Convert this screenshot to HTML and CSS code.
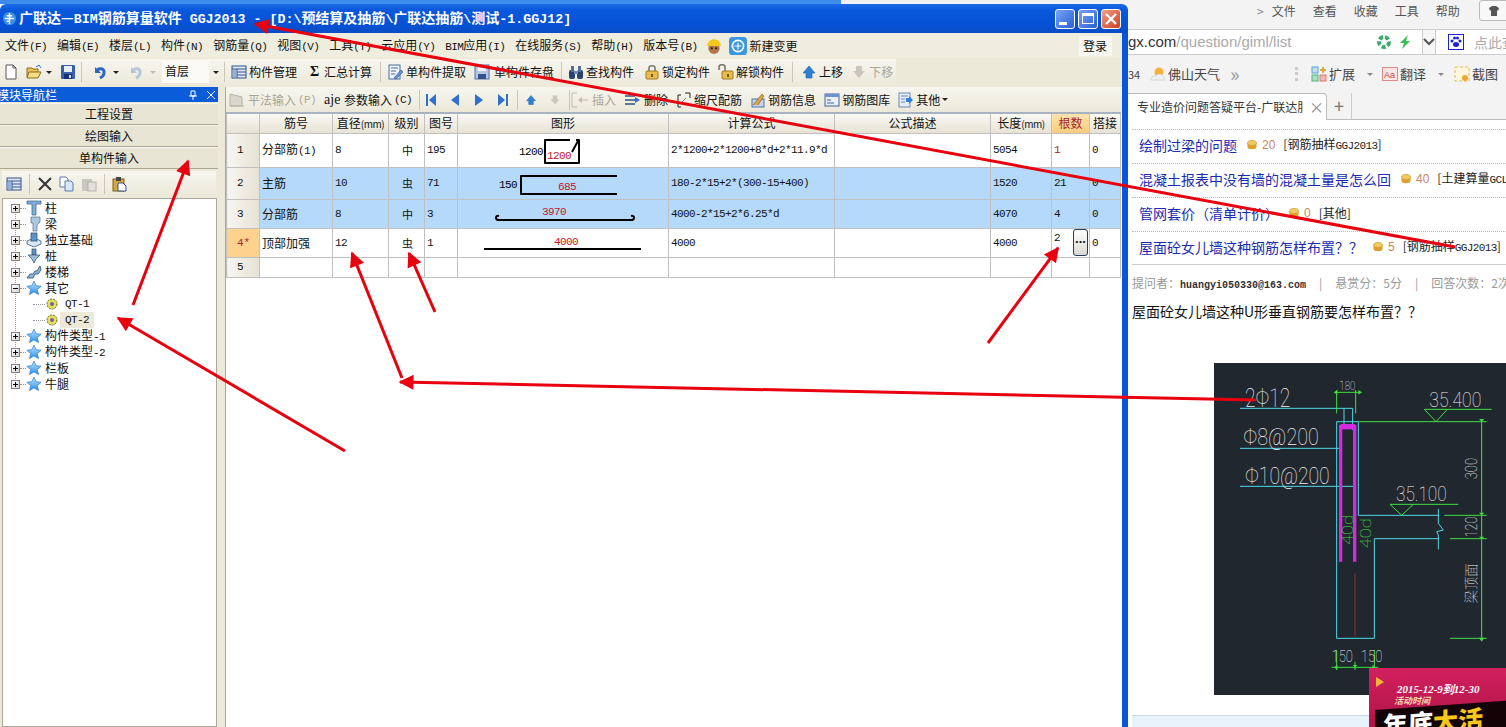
FILE: index.html
```html
<!DOCTYPE html>
<html>
<head>
    <meta charset="UTF-8">
    <meta name="viewport" content="width=device-width, initial-scale=1.0">
    <title>广联达 GGJ2013</title>
    <link rel="stylesheet" href="styles.css">
</head>
<body>
<svg class="defs" width="0" height="0">
    <defs>
        <linearGradient id="gStar" x1="0" y1="0" x2="0" y2="1"><stop offset="0" stop-color="#bfe4ff"/><stop offset="1" stop-color="#2d8fe8"/></linearGradient>
        <symbol id="i-grid" viewBox="0 0 16 16"><rect x="1" y="2" width="14" height="12" fill="#dfe9f7" stroke="#34508c"/><path d="M1 5h14M6 5v9M6 8h9M6 11h9" stroke="#34508c" fill="none"/><rect x="2" y="6" width="3" height="7" fill="#8fb1e0"/></symbol>
        <symbol id="i-new" viewBox="0 0 16 16"><path d="M3 1h7l3 3v11H3z" fill="#fff" stroke="#555"/><path d="M10 1v3h3" fill="none" stroke="#555"/></symbol>
        <symbol id="i-open" viewBox="0 0 16 16"><path d="M1 4h5l1 1h5v8H1z" fill="#e8c25a" stroke="#8a6a1c"/><path d="M3 8h12l-3 6H1z" fill="#f8dc85" stroke="#8a6a1c"/><path d="M10 3l3-2 2 3" fill="none" stroke="#3a6fc4"/></symbol>
        <symbol id="i-save" viewBox="0 0 16 16"><rect x="1" y="1" width="14" height="14" rx="1" fill="#3b5fa8"/><rect x="4" y="2" width="8" height="6" fill="#e8eefa"/><rect x="4" y="10" width="8" height="5" fill="#15307a"/><rect x="9" y="11" width="2" height="3" fill="#dfe6f5"/></symbol>
        <symbol id="i-undo" viewBox="0 0 16 16"><path d="M4 3v6h6" fill="#2f67c2"/><path d="M5 8c2-5 9-4 8 1 0 2-2 4-4 5" fill="none" stroke="#2f67c2" stroke-width="3"/></symbol>
        <symbol id="i-extract" viewBox="0 0 16 16"><rect x="1" y="1" width="11" height="14" fill="#eef3fb" stroke="#4a6aa8"/><path d="M3 4h7M3 7h5M3 10h4" stroke="#4a6aa8"/><path d="M6 14l7-8 2 2-7 7z" fill="#6b93cf" stroke="#2d4d8a" stroke-width=".6"/></symbol>
        <symbol id="i-store" viewBox="0 0 16 16"><rect x="1" y="1" width="14" height="14" fill="#b7c6e3" stroke="#53709f"/><rect x="4" y="1" width="8" height="6" fill="#f2f5fb"/><rect x="4" y="10" width="8" height="5" fill="#34508c"/></symbol>
        <symbol id="i-find" viewBox="0 0 16 16"><rect x="1" y="6" width="6" height="9" rx="2" fill="#29426f"/><rect x="9" y="6" width="6" height="9" rx="2" fill="#29426f"/><rect x="3" y="2" width="3" height="6" fill="#53709f"/><rect x="10" y="2" width="3" height="6" fill="#53709f"/><rect x="6" y="7" width="4" height="3" fill="#7089b5"/></symbol>
        <symbol id="i-lock" viewBox="0 0 16 16"><path d="M5 7V4c0-3 6-3 6 0v3" fill="none" stroke="#777" stroke-width="1.6"/><rect x="2" y="7" width="12" height="8" rx="1" fill="#e9bb4c" stroke="#a07a1f"/><rect x="7" y="10" width="2" height="3" fill="#7a5a10"/></symbol>
        <symbol id="i-unlock" viewBox="0 0 16 16"><path d="M1 6V3c0-3 6-3 6 0v4" fill="none" stroke="#777" stroke-width="1.6"/><rect x="4" y="7" width="11" height="8" rx="1" fill="#e9bb4c" stroke="#a07a1f"/><rect x="9" y="10" width="2" height="3" fill="#7a5a10"/></symbol>
        <symbol id="i-up" viewBox="0 0 16 16"><path d="M8 2l6 7h-3v5H5V9H2z" fill="#2f7fd8" stroke="#1b5aa6" stroke-width=".6"/></symbol>
        <symbol id="i-down" viewBox="0 0 16 16"><path d="M8 14l6-7h-3V2H5v5H2z" fill="#c9c7bd"/></symbol>
        <symbol id="i-plan" viewBox="0 0 18 18"><path d="M2 15V3l12 3v9z" fill="#d8d6ca" stroke="#b5b3a7"/><path d="M2 15h14" stroke="#b5b3a7"/></symbol>
        <symbol id="i-first" viewBox="0 0 12 14"><rect x="1" y="1" width="2" height="12" fill="#2f6fcf"/><path d="M11 1v12L4 7z" fill="#2f6fcf"/></symbol>
        <symbol id="i-prev" viewBox="0 0 12 14"><path d="M10 1v12L2 7z" fill="#2f6fcf"/></symbol>
        <symbol id="i-next" viewBox="0 0 12 14"><path d="M2 1v12l8-6z" fill="#2f6fcf"/></symbol>
        <symbol id="i-last" viewBox="0 0 12 14"><rect x="9" y="1" width="2" height="12" fill="#2f6fcf"/><path d="M1 1v12l7-6z" fill="#2f6fcf"/></symbol>
        <symbol id="i-insert" viewBox="0 0 20 16"><path d="M2 1v14M2 1h5M2 15h5M9 8h9" stroke="#bdbbb0" fill="none"/><path d="M12 5l-4 3 4 3z" fill="#bdbbb0"/></symbol>
        <symbol id="i-delete" viewBox="0 0 18 16"><path d="M1 4h10M1 8h12M1 12h10" stroke="#36507f" stroke-width="1.4"/><path d="M11 5l5 3-5 3z" fill="#2f6fcf"/></symbol>
        <symbol id="i-scale" viewBox="0 0 16 16"><path d="M2 3v12M2 3h3M2 15h3M14 1v5M9 1h5" stroke="#222" fill="none"/><path d="M6 10l4-4" stroke="#888"/></symbol>
        <symbol id="i-info" viewBox="0 0 16 16"><rect x="2" y="7" width="12" height="8" fill="#c6d6ee" stroke="#51719f"/><path d="M3 13L12 2l2 2-6 9" fill="#d8a24a" stroke="#7a5a20" stroke-width=".6"/></symbol>
        <symbol id="i-lib" viewBox="0 0 16 16"><rect x="1" y="2" width="14" height="12" fill="#e9eff9" stroke="#41659e"/><rect x="1" y="2" width="14" height="3" fill="#6d94cf"/><path d="M3 8h4M3 11h7" stroke="#41659e"/></symbol>
        <symbol id="i-other" viewBox="0 0 16 16"><rect x="1" y="1" width="11" height="14" fill="#e6edf8" stroke="#6a88b8"/><path d="M3 4h7M3 7h4M3 10h4" stroke="#6a88b8"/><path d="M8 6h3V4l4 4-4 4v-2H8z" fill="#2f7fd8"/></symbol>
        <symbol id="i-cut" viewBox="0 0 16 16"><path d="M2 2l12 12M14 2L2 14" stroke="#333" stroke-width="2"/></symbol>
        <symbol id="i-copy" viewBox="0 0 16 16"><path d="M1 1h6l2 2v8H1z" fill="#fff" stroke="#5b7cb2"/><path d="M6 5h6l2 2v8H6z" fill="#dbe6f6" stroke="#5b7cb2"/></symbol>
        <symbol id="i-paste" viewBox="0 0 16 16"><rect x="1" y="3" width="10" height="12" fill="#c9c7c0"/><rect x="7" y="6" width="8" height="9" fill="#e2e0da" stroke="#b5b3ab"/></symbol>
        <symbol id="i-clip" viewBox="0 0 16 16"><rect x="1" y="3" width="11" height="12" fill="#d7a93d" stroke="#7d5e16"/><rect x="4" y="1" width="5" height="4" fill="#444"/><path d="M6 7h5l3 3v5H6z" fill="#fff" stroke="#34508c"/></symbol>
        <symbol id="i-star" viewBox="0 0 16 16"><path d="M8 1l2.1 4.7 5.1.5-3.9 3.4 1.2 5L8 11.9l-4.5 2.7 1.2-5L.8 6.200l5.100-.5z" fill="url(#gStar)" stroke="#2a7fd0" stroke-width=".7"/></symbol>
        <symbol id="i-column" viewBox="0 0 16 16"><path d="M1 1h14v3H10v11H6V4H1z" fill="#7fb0dc" stroke="#33597f" stroke-width=".7"/></symbol>
        <symbol id="i-beam" viewBox="0 0 16 16"><path d="M5 1l9 0v5l-3 3v6H7V7H5z" fill="#a8c8e6" stroke="#566d85" stroke-width=".7"/></symbol>
        <symbol id="i-found" viewBox="0 0 16 16"><path d="M1 9l7-3 7 3v3l-7 3-7-3z" fill="#d7e6f4" stroke="#3e5f82" stroke-width=".8"/><rect x="5" y="1" width="6" height="8" fill="#5e93c5" stroke="#2b4a6b" stroke-width=".7"/></symbol>
        <symbol id="i-pile" viewBox="0 0 16 16"><rect x="6" y="1" width="4" height="6" fill="#5e93c5" stroke="#2b4a6b" stroke-width=".7"/><path d="M2 7h12l-4 4-2 4-2-4z" fill="#9dbfde" stroke="#2b4a6b" stroke-width=".7"/></symbol>
        <symbol id="i-stair" viewBox="0 0 16 16"><path d="M1 14l3-4h3l2-3h2l3-5 1 4-3 4H9l-2 4H4z" fill="#8db6dc" stroke="#2b4a6b" stroke-width=".8"/></symbol>
        <symbol id="i-gear" viewBox="0 0 12 12"><circle cx="6" cy="6" r="5" fill="#e9e05a" stroke="#6a6420" stroke-dasharray="2 1"/><circle cx="6" cy="6" r="2" fill="#7a5ca0"/></symbol>
        <symbol id="i-coin" viewBox="0 0 10 10"><ellipse cx="5" cy="3" rx="4.500" ry="2.500" fill="#f2cb62" stroke="#c58f1f" stroke-width=".6"/><path d="M.5 3v4c0 3 9 3 9 0V3c0 3-9 3-9 0" fill="#dca02e"/></symbol>
    </defs>
</svg>

<div class="page">
    <div class="win">
        <div class="strip"><div class="strip-blue"></div><div class="strip-grey"></div></div>
        <div class="titlebar">
            <svg class="app-ico" viewBox="0 0 16 16"><circle cx="8" cy="8" r="7" fill="#3a8fe0"/><path d="M8 2v12M3 8h10M5 5h6M5 11h3" stroke="#fff" stroke-width="1.500"/></svg>
            <span class="title-text">广联达—<span class="tm">BIM</span>钢筋算量软件<span class="tm"> GGJ2013 - [D:\</span>预结算及抽筋<span class="tm">\</span>广联达抽筋<span class="tm">\</span>测试<span class="tm">-1.GGJ12]</span></span>
            <div class="win-btns">
                <div class="wbtn"><i class="w-min"></i></div>
                <div class="wbtn"><i class="w-max"></i></div>
                <div class="wbtn w-close">
                    <svg viewBox="0 0 12 12" width="12" height="12"><path d="M1 1l10 10M11 1L1 11" stroke="#fff" stroke-width="2.400"/></svg>
                </div>
            </div>
        </div>
        <div class="client">
            <div class="menubar">
                <span class="mi">文件<span class="k">(F)</span></span>
                <span class="mi">编辑<span class="k">(E)</span></span>
                <span class="mi">楼层<span class="k">(L)</span></span>
                <span class="mi">构件<span class="k">(N)</span></span>
                <span class="mi">钢筋量<span class="k">(Q)</span></span>
                <span class="mi">视图<span class="k">(V)</span></span>
                <span class="mi">工具<span class="k">(T)</span></span>
                <span class="mi">云应用<span class="k">(Y)</span></span>
                <span class="mi"><span class="k">BIM</span>应用<span class="k">(I)</span></span>
                <span class="mi">在线服务<span class="k">(S)</span></span>
                <span class="mi">帮助<span class="k">(H)</span></span>
                <span class="mi">版本号<span class="k">(B)</span></span>
                <svg class="ic18 helmet" viewBox="0 0 16 16"><circle cx="8" cy="10" r="5" fill="#b3764a"/><path d="M2 8c0-8 12-8 12 0z" fill="#f3c81e"/><circle cx="6" cy="10" r="1" fill="#222"/><circle cx="10" cy="10" r="1" fill="#222"/></svg>
                <svg class="ic18 change" viewBox="0 0 16 16"><rect width="16" height="16" rx="3" fill="#3b97e0"/><circle cx="8" cy="8" r="5" fill="none" stroke="#fff" stroke-width="1.400"/><path d="M8 5v6M5 8h6" stroke="#fff"/></svg>
                <span class="mi new-change">新建变更</span>
                <span class="login">登录</span>
            </div>

            <div class="toolrow">
                <div class="toolbar1">
                    <svg class="ic16 t1-new"><use href="#i-new"/></svg>
                    <svg class="ic16 t1-open"><use href="#i-open"/></svg>
                    <i class="caret t1-c1"></i>
                    <svg class="ic16 t1-save"><use href="#i-save"/></svg>
                    <i class="sep"></i>
                    <svg class="ic16 t1-undo"><use href="#i-undo"/></svg>
                    <i class="caret t1-c2"></i>
                    <svg class="ic16 t1-redo muted"><use href="#i-undo"/></svg>
                    <i class="caret off"></i>
                    <div class="floor">首层</div>
                    <i class="caret floor-c"></i>
                    <i class="sep sep-r6"></i>
                    <span class="tb tb-10"><svg class="ic16"><use href="#i-grid"/></svg>构件管理</span>
                    <span class="tb"><b class="sigma">Σ</b>汇总计算</span>
                    <i class="sep sep-l"></i>
                    <span class="tb"><svg class="ic16"><use href="#i-extract"/></svg>单构件提取</span>
                    <span class="tb tb-e g4"><svg class="ic16"><use href="#i-store"/></svg>单构件存盘</span>
                    <i class="sep sep-m"></i>
                    <span class="tb tb-10"><svg class="ic16"><use href="#i-find"/></svg>查找构件</span>
                    <span class="tb"><svg class="ic16"><use href="#i-lock"/></svg>锁定构件</span>
                    <span class="tb tb-e"><svg class="ic16"><use href="#i-unlock"/></svg>解锁构件</span>
                    <i class="sep sep-w"></i>
                    <span class="tb"><svg class="ic16"><use href="#i-up"/></svg>上移</span>
                    <span class="tb tb-e off"><svg class="ic16"><use href="#i-down"/></svg>下移</span>
                </div>
            </div>

            <div class="main">
                <div class="nav">
                    <div class="nav-title"><span>模块导航栏</span>
                        <svg class="pin" viewBox="0 0 10 10" width="10" height="10"><path d="M3 1h4v5H3zM1 6h8M5 6v4" stroke="#fff" fill="none"/></svg>
                        <svg class="pin" viewBox="0 0 10 10" width="10" height="10"><path d="M1 1l8 8M9 1L1 9" stroke="#fff"/></svg>
                    </div>
                    <div class="nav-btn">工程设置</div>
                    <div class="nav-btn">绘图输入</div>
                    <div class="nav-btn">单构件输入</div>
                    <div class="nav-tools">
                        <svg class="ic16"><use href="#i-grid"/></svg>
                        <i class="sep"></i>
                        <svg class="ic16"><use href="#i-cut"/></svg>
                        <svg class="ic16"><use href="#i-copy"/></svg>
                        <svg class="ic16"><use href="#i-paste"/></svg>
                        <i class="sep"></i>
                        <svg class="ic16"><use href="#i-clip"/></svg>
                    </div>
                    <div class="tree">
                        <div class="node"><i class="plus"></i><i class="dash"></i><svg class="ic16"><use href="#i-column"/></svg><span>柱</span></div>
                        <div class="node"><i class="plus"></i><i class="dash"></i><svg class="ic16"><use href="#i-beam"/></svg><span>梁</span></div>
                        <div class="node"><i class="plus"></i><i class="dash"></i><svg class="ic16"><use href="#i-found"/></svg><span>独立基础</span></div>
                        <div class="node"><i class="plus"></i><i class="dash"></i><svg class="ic16"><use href="#i-pile"/></svg><span>桩</span></div>
                        <div class="node"><i class="plus"></i><i class="dash"></i><svg class="ic16"><use href="#i-stair"/></svg><span>楼梯</span></div>
                        <div class="node"><i class="plus minus"></i><i class="dash"></i><svg class="ic16"><use href="#i-star"/></svg><span>其它</span></div>
                        <div class="node leaf"><i class="leaf-dash"></i><svg class="gear"><use href="#i-gear"/></svg><span class="leaf-name">QT-1</span></div>
                        <div class="node leaf"><i class="leaf-dash"></i><svg class="gear"><use href="#i-gear"/></svg><span class="leaf-name leaf-sel">QT-2</span></div>
                        <div class="node"><i class="plus"></i><i class="dash"></i><svg class="ic16"><use href="#i-star"/></svg><span>构件类型<span class="k">-1</span></span></div>
                        <div class="node"><i class="plus"></i><i class="dash"></i><svg class="ic16"><use href="#i-star"/></svg><span>构件类型<span class="k">-2</span></span></div>
                        <div class="node"><i class="plus"></i><i class="dash"></i><svg class="ic16"><use href="#i-star"/></svg><span>栏板</span></div>
                        <div class="node"><i class="plus"></i><i class="dash"></i><svg class="ic16"><use href="#i-star"/></svg><span>牛腿</span></div>
                    </div>
                </div>

                <div class="pane">
                    <div class="toolbar2">
                        <span class="tb off"><svg class="ic18"><use href="#i-plan"/></svg>平法输入<span class="k">(P)</span></span>
                        <span class="tb tb-2"><span class="aje">aje</span>参数输入<span class="k">(C)</span></span>
                        <i class="sep"></i>
                        <svg class="nav-ic"><use href="#i-first"/></svg>
                        <svg class="nav-ic"><use href="#i-prev"/></svg>
                        <svg class="nav-ic"><use href="#i-next"/></svg>
                        <svg class="nav-ic"><use href="#i-last"/></svg>
                        <i class="sep sep-n"></i>
                        <svg class="nav-ic"><use href="#i-up"/></svg>
                        <svg class="nav-ic"><use href="#i-down"/></svg>
                        <i class="sep sep-o"></i>
                        <span class="tb off"><svg class="ic20"><use href="#i-insert"/></svg>插入</span>
                        <span class="tb"><svg class="ic18"><use href="#i-delete"/></svg>删除</span>
                        <span class="tb"><svg class="ic16"><use href="#i-scale"/></svg>缩尺配筋</span>
                        <span class="tb"><svg class="ic16"><use href="#i-info"/></svg>钢筋信息</span>
                        <span class="tb"><svg class="ic16"><use href="#i-lib"/></svg>钢筋图库</span>
                        <span class="tb"><svg class="ic16"><use href="#i-other"/></svg>其他<i class="caret"></i></span>
                    </div>

                    <table class="grid">
                        <colgroup>
                            <col class="c-no"><col class="c-name"><col class="c-dia"><col class="c-lvl"><col class="c-fig">
                            <col class="c-shape"><col class="c-calc"><col class="c-desc"><col class="c-len"><col class="c-count"><col class="c-lap">
                        </colgroup>
                        <tr class="r-head">
                            <th></th><th>筋号</th><th>直径<span class="unit">(mm)</span></th><th>级别</th><th>图号</th><th>图形</th><th>计算公式</th><th>公式描述</th><th>长度<span class="unit">(mm)</span></th><th class="hot">根数</th><th>搭接</th>
                        </tr>
                        <tr class="r-1">
                            <th class="rn">1</th><td>分部筋<span class="k">(1)</span></td><td class="k dia">8</td><td class="ctr">中</td><td class="k">195</td>
                            <td class="shape"><svg width="211" height="33"><text class="dim" x="61" y="21">1200</text><path class="bar" d="M112 6H87V29H121V6H118M120 7L114 18"/><text class="red" x="89" y="25">1200</text></svg></td>
                            <td class="k">2*1200+2*1200+8*d+2*11.9*d</td><td></td><td class="k">5054</td><td class="k cnt-red">1</td><td class="k">0</td>
                        </tr>
                        <tr class="r-2 sel">
                            <th class="rn">2</th><td>主筋</td><td class="k dia">10</td><td class="ctr">虫</td><td class="k">71</td>
                            <td class="shape"><svg width="211" height="31"><text class="dim" x="41" y="20">150</text><path class="bar" d="M159 8H63V26H159"/><text class="red" x="100" y="22">685</text></svg></td>
                            <td class="k">180-2*15+2*(300-15+400)</td><td></td><td class="k">1520</td><td class="k">21</td><td class="k">0</td>
                        </tr>
                        <tr class="r-3 sel">
                            <th class="rn">3</th><td>分部筋</td><td class="k dia">8</td><td class="ctr">中</td><td class="k">3</td>
                            <td class="shape"><svg width="211" height="28"><path class="bar" d="M41 16C37 15 37 20 41 20H173C177 20 177 15 173 16"/><text class="red" x="84" y="15">3970</text></svg></td>
                            <td class="k">4000-2*15+2*6.25*d</td><td></td><td class="k">4070</td><td class="k">4</td><td class="k">0</td>
                        </tr>
                        <tr class="r-4">
                            <th class="rn cur">4*</th><td>顶部加强</td><td class="k dia">12</td><td class="ctr">虫</td><td class="k">1</td>
                            <td class="shape"><svg width="211" height="28"><path class="bar" d="M26 20H183"/><text class="red" x="96" y="16">4000</text></svg></td>
                            <td class="k">4000</td><td></td><td class="k">4000</td>
                            <td class="k edit"><div class="edit-box"><span class="edit-val">2</span><div class="dots">···</div></div></td>
                            <td class="k">0</td>
                        </tr>
                        <tr class="r-5">
                            <th class="rn">5</th><td></td><td class="dia"></td><td></td><td></td><td></td><td></td><td></td><td></td><td></td><td></td>
                        </tr>
                    </table>
                </div>
            </div>
        </div>
    </div>

    <div class="browser">
        <div class="b-menu">
            <span class="chev">&gt;</span><span>文件</span><span>查看</span><span>收藏</span><span>工具</span><span>帮助</span>
            <div class="skin"><svg viewBox="0 0 12 12" width="12" height="12"><path d="M1 3l3-2h4l3 2-1 3-1-1v6H3V5L2 6z" fill="#555"/></svg></div>
        </div>
        <div class="b-addr">
            <span class="url">gx.com<span class="url-rest">/question/giml/list</span></span>
            <svg class="ic16" viewBox="0 0 16 16"><circle cx="8" cy="8" r="5" fill="none" stroke="#3aae6a" stroke-width="4" stroke-dasharray="4 2"/></svg>
            <svg class="ic16" viewBox="0 0 16 16"><path d="M11 1L3 9h4l-2 6 8-8H9z" fill="#35c24f"/></svg>
            <div class="addr-drop"><svg viewBox="0 0 12 8" width="12" height="8"><path d="M1 1l5 5 5-5" fill="none" stroke="#555" stroke-width="2"/></svg></div>
            <svg class="ic16 paw" viewBox="0 0 16 16"><rect width="16" height="16" fill="#1a22d6"/><rect x="1" y="1" width="14" height="14" fill="#fff"/><circle cx="4" cy="7" r="1.500" fill="#1a22d6"/><circle cx="6.500" cy="4" r="1.500" fill="#1a22d6"/><circle cx="9.500" cy="4" r="1.500" fill="#1a22d6"/><circle cx="12" cy="7" r="1.500" fill="#1a22d6"/><ellipse cx="8" cy="10.500" rx="3" ry="2.500" fill="#1a22d6"/></svg>
            <span class="search-hint">点此查</span>
        </div>
        <div class="b-fav">
            <span class="fav-num">34</span>
            <svg class="ic16" viewBox="0 0 16 16"><circle cx="9" cy="6" r="4.500" fill="#f6b23c"/><path d="M1 14c0-3 2-5 5-4 2-3 8-2 9 4z" fill="#eef0f2" stroke="#d5d8dc"/></svg>
            <span class="fav-city">佛山天气</span>
            <span class="fav-more">»</span>
            <i class="grip"></i>
            <span class="fav-tool f-ext"><svg class="ic16" viewBox="0 0 16 16"><rect x="1" y="1" width="6" height="6" fill="#bfe0f5" stroke="#5aa4d6"/><rect x="1" y="9" width="6" height="6" fill="#a7e0c0" stroke="#52b380"/><rect x="9" y="9" width="6" height="6" fill="#f5b5b0" stroke="#dd7a72"/><path d="M12 1v6M9 4h6" stroke="#e8a838" stroke-width="2"/></svg>扩展<i class="caret"></i></span>
            <span class="fav-tool f-tr"><svg class="ic16" viewBox="0 0 16 16"><rect x=".5" y="1.500" width="15" height="13" fill="#fbe7e4" stroke="#d88"/><text x="2" y="12" class="aa">Aa</text></svg>翻译<i class="caret"></i></span>
            <span class="fav-tool f-sh"><svg class="ic16" viewBox="0 0 16 16"><rect x="1" y="1" width="14" height="14" fill="#fff6dd" stroke="#e7b84a" stroke-dasharray="3 2"/><circle cx="11" cy="12" r="3" fill="#e8a838"/></svg>截图</span>
        </div>
        <div class="b-tabs">
            <div class="tab"><span class="tab-text">专业造价问题答疑平台-广联达服</span><span class="tab-x">×</span></div>
            <div class="tab-new">+</div>
        </div>
        <div class="b-body">
            <div class="q-list">
                <div class="q"><a>绘制过梁的问题</a><svg class="coin"><use href="#i-coin"/></svg><span class="pts">20</span><span class="cat">[钢筋抽样<span class="k">GGJ2013</span>]</span></div>
                <div class="q"><a>混凝土报表中没有墙的混凝土量是怎么回</a><svg class="coin"><use href="#i-coin"/></svg><span class="pts">40</span><span class="cat">[土建算量<span class="k">GCL2013</span>]</span></div>
                <div class="q"><a>管网套价（清单计价）</a><svg class="coin"><use href="#i-coin"/></svg><span class="pts">0</span><span class="cat">[其他]</span></div>
                <div class="q"><a>屋面砼女儿墙这种钢筋怎样布置？？</a><svg class="coin"><use href="#i-coin"/></svg><span class="pts">5</span><span class="cat">[钢筋抽样<span class="k">GGJ2013</span>]</span></div>
            </div>
            <div class="meta">提问者：<span class="mail">huangyi050330@163.com</span><i class="bar-v">|</i>悬赏分：5分<i class="bar-v">|</i>回答次数：2次</div>
            <div class="question">屋面砼女儿墙这种U形垂直钢筋要怎样布置？？</div>

            <svg class="cad" viewBox="12 9 876 996" width="292" height="332">
                <rect x="12" y="9" width="876" height="996" fill="#20272e"/>
                <g class="cy">
                    <path d="M90 145H428M402 145V205M428 145V210M90 265H390M90 379H436"/>
                    <path d="M380 185H445V466H685M380 185V835H493V536H685M685 447V490M685 490L700 510L680 515L685 525V568"/>
                </g>
                <g class="mg">
                    <path d="M392 605V194M434 605V194"/>
                    <path class="mg-top" d="M392 200H434"/>
                </g>
                <path d="M435 640V830" class="rd"/>
                <g class="gn">
                    <path d="M372 97H455M380 90V160M437 90V160M445 185H830M643 148H845M643 148L678 185L712 148"/>
                    <path d="M815 185V835M703 466H830M720 536H830M720 835H830M540 433H745M540 433L575 466L610 433"/>
                    <path d="M365 922H505M380 870V930M435 905V930M493 870V930"/>
                </g>
                <g class="gnf">
                    <path d="M372 97l10-7v14zM455 97l-10-7v14zM815 185l-8-8h16zM815 466l-8-8h16zM815 536l-8-6h16zM815 845l-8-12h16zM372 922l10-7v14zM435 922l-7-7h14zM497 922l-10-7v14z"/>
                </g>
                <g class="cad-t">
                    <text x="388" y="90" font-size="38" textLength="48" lengthAdjust="spacingAndGlyphs">180</text>
                    <text x="105" y="140" font-size="76" textLength="136" lengthAdjust="spacingAndGlyphs">2Φ12</text>
                    <text x="100" y="255" font-size="72" textLength="226" lengthAdjust="spacingAndGlyphs">Φ8@200</text>
                    <text x="105" y="373" font-size="72" textLength="254" lengthAdjust="spacingAndGlyphs">Φ10@200</text>
                    <text x="658" y="140" font-size="62" textLength="156" lengthAdjust="spacingAndGlyphs">35.400</text>
                    <text x="558" y="423" font-size="62" textLength="152" lengthAdjust="spacingAndGlyphs">35.100</text>
                    <text x="365" y="905" font-size="52" textLength="64" lengthAdjust="spacingAndGlyphs">150</text>
                    <text x="453" y="905" font-size="52" textLength="64" lengthAdjust="spacingAndGlyphs">150</text>
                    <text transform="translate(800 358) rotate(-90)" font-size="50" textLength="64" lengthAdjust="spacingAndGlyphs">300</text>
                    <text transform="translate(800 532) rotate(-90)" font-size="50" textLength="62" lengthAdjust="spacingAndGlyphs">120</text>
                    <text transform="translate(798 730) rotate(-90)" font-size="40" class="cad-cjk">梁顶面</text>
                </g>
                <g class="cad-g">
                    <text transform="translate(428 555) rotate(-90)" font-size="44" textLength="90" lengthAdjust="spacingAndGlyphs">40d</text>
                    <text transform="translate(484 565) rotate(-90)" font-size="44" textLength="90" lengthAdjust="spacingAndGlyphs">40d</text>
                </g>
            </svg>
            <div class="b-foot"></div>
        </div>

        <div class="ad">
            <i class="ad-tri"></i>
            <div class="ad-date">2015-12-9到12-30</div>
            <div class="ad-tag">活动时间</div>
            <div class="ad-big">年底<b>大</b><b>活</b></div>
        </div>
    </div>

    <svg class="arrows" viewBox="0 0 1506 727" width="1506" height="727">
        <defs>
            <marker id="ah" viewBox="0 0 10 10" refX="9" refY="5" markerWidth="6" markerHeight="5" orient="auto"><path d="M0 0L10 5L0 10z" fill="#e8000f"/></marker>
        </defs>
        <g class="arrow-lines" marker-end="url(#ah)">
            <path d="M1455 247L255 24"/>
            <path d="M133 305L188 161"/>
            <path d="M345 451L118 318"/>
            <path d="M402 378L352 253"/>
            <path d="M435 312L409 253"/>
            <path d="M988 343L1058 248"/>
            <path d="M1256 400L400 382"/>
        </g>
    </svg>
</div>
</body>
</html>
```

FILE: styles.css
```css
*{
    box-sizing: border-box;
}
body{
    margin: 0;
    font-family: "Noto Sans CJK SC", "Liberation Sans", sans-serif;
    font-size: 12px;
    line-height: 16px;
    color: #111;
    background: #fff;
}
.defs{
    position: absolute;
}
.page{
    position: relative;
    display: flex;
    width: 1506px;
    height: 727px;
    overflow: hidden;
}
.arrows{
    position: absolute;
    left: 0;
    top: 0;
    pointer-events: none;
}
.arrow-lines path{
    fill: none;
    stroke: #e8000f;
    stroke-width: 3;
}
.k{
    font-family: "Liberation Mono", monospace;
    font-size: 11px;
    letter-spacing: -0.6px;
}
i{
    font-style: normal;
}
.ic16{
    width: 16px;
    height: 16px;
    flex: none;
}
.ic18{
    width: 18px;
    height: 18px;
    flex: none;
}
.ic20{
    width: 20px;
    height: 16px;
    flex: none;
}

/* software window */
.win{
    width: 1128px;
    flex: none;
    display: flex;
    flex-direction: column;
}
.strip{
    display: flex;
    height: 4px;
    flex: none;
}
.strip-blue{
    width: 841px;
    background: #3d8bea;
}
.strip-grey{
    flex: 1;
    background: #f1f1f1;
}
.titlebar{
    height: 29px;
    flex: none;
    display: flex;
    align-items: center;
    padding-left: 2px;
    border-radius: 6px 6px 0 0;
    background: linear-gradient(#1a6ce8 0, #0a58dc 20%, #0552d6 70%, #0a4cc4 100%);
}
.app-ico{
    width: 15px;
    height: 15px;
    margin-right: 2px;
}
.title-text{
    font-size: 14px;
    font-weight: bold;
    color: #fff;
    white-space: pre;
}
.tm{
    font-family: "Liberation Mono", monospace;
    font-size: 13.3px;
}
.win-btns{
    margin-left: auto;
    margin-right: 7px;
    display: flex;
    gap: 3px;
}
.wbtn{
    width: 20px;
    height: 20px;
    border: 1px solid #fff;
    border-radius: 3px;
    background: linear-gradient(135deg, #7aa4f2, #2a5fd6);
    position: relative;
    display: flex;
    align-items: center;
    justify-content: center;
}
.w-min{
    width: 8px;
    height: 3px;
    background: #fff;
    margin-top: 9px;
    margin-right: 5px;
}
.w-max{
    width: 12px;
    height: 11px;
    border: 1px solid #fff;
    border-top-width: 3px;
}
.w-close{
    background: linear-gradient(135deg, #f0a08a, #d23c1c);
}
.client{
    flex: 1;
    display: flex;
    flex-direction: column;
    min-height: 0;
    border-right: 6px solid #0a55d8;
    box-shadow: inset -2px 0 0 #e4e2d6;
    background: #ece9d8;
}
.menubar{
    height: 25px;
    flex: none;
    display: flex;
    align-items: center;
    padding-left: 5px;
    padding-right: 10px;
    gap: 10px;
    background: #efedde;
    white-space: nowrap;
}
.helmet{
    margin-left: -2px;
}
.change{
    margin-left: -4px;
}
.new-change{
    margin-left: -8px;
}
.login{
    margin-left: auto;
    background: #f7f6ef;
    padding: 2px 5px 2px 4px;
}
.toolrow{
    height: 28px;
    flex: none;
    padding-top: 1px;
    display: flex;
    background: #ece9d8;
}
.toolbar1{
    width: 896px;
    height: 26px;
    display: flex;
    align-items: center;
    padding-left: 3px;
    background: linear-gradient(#f7f6ef, #ece9da);
    white-space: nowrap;
}
.t1-open{
    margin-left: 7px;
}
.t1-c1{
    margin-left: 4px;
}
.t1-save{
    margin-left: 8px;
}
.t1-undo{
    margin-left: 4px;
}
.t1-c2{
    margin-left: 6px;
}
.t1-redo{
    margin-left: 8px;
}
.muted{
    opacity: .3;
}
.caret{
    display: inline-block;
    width: 0;
    height: 0;
    border-left: 3px solid transparent;
    border-right: 3px solid transparent;
    border-top: 3px solid #222;
    flex: none;
}
.caret.off{
    border-top-color: #bbb;
    margin-left: 7px;
}
.sep{
    width: 1px;
    height: 20px;
    background: #c9c6b5;
    margin: 0 5px;
    flex: none;
}
.sep-l{
    margin-left: 0;
    margin-right: 7px;
}
.sep-r6{
    margin-right: 6px;
}
.sep-m{
    margin: 0 6px 0 7px;
}
.sep-w{
    margin: 0 8px;
}
.sep-n{
    margin-left: -4px;
    margin-right: 7px;
}
.sep-o{
    margin-left: -4px;
    margin-right: 0;
}
.floor{
    width: 47px;
    height: 22px;
    flex: none;
    margin-left: 6px;
    padding-left: 3px;
    line-height: 20px;
    background: #fbfaf5;
}
.floor-c{
    margin-left: 4px;
}
.tb{
    display: flex;
    align-items: center;
    gap: 2px;
    margin-right: 8px;
    white-space: nowrap;
}
.tb-e{
    margin-right: 0;
}
.tb-10{
    margin-right: 10px;
}
.tb-2{
    margin-right: 2px;
}
.g4{
    gap: 4px;
}
.tb.off{
    color: #a8a69a;
}
.sigma{
    width: 15px;
    font-family: "Liberation Serif", serif;
    font-size: 14px;
    color: #111;
    text-align: center;
}

/* left panel */
.main{
    flex: 1;
    display: flex;
    min-height: 0;
    padding-top: 1px;
}
.nav{
    width: 218px;
    flex: none;
    display: flex;
    flex-direction: column;
    background: #ece9d8;
}
.nav-title{
    height: 15px;
    flex: none;
    display: flex;
    align-items: center;
    gap: 8px;
    padding-right: 2px;
    margin-bottom: 1px;
    color: #fff;
    background: #0a5cd8;
}
.nav-title span{
    flex: 1;
    margin-left: -3px;
}
.nav-btn{
    height: 22px;
    flex: none;
    text-align: center;
    line-height: 20px;
    background: #e8e5d5;
    border-top: 1px solid #f8f7ef;
    border-bottom: 1px solid #a9a793;
}
.nav-tools{
    height: 25px;
    flex: none;
    display: flex;
    align-items: center;
    gap: 6px;
    margin: 2px 2px 2px 2px;
    padding-left: 4px;
    background: linear-gradient(#f7f6ef, #ece9da);
}
.nav-tools .sep{
    margin: 0 1px;
}
.tree{
    flex: 1;
    position: relative;
    margin: 0 1px 0 2px;
    padding-top: 1px;
    background: #fff;
    border: 1px solid #aca899;
}
.tree::before{
    content: "";
    position: absolute;
    left: 12px;
    top: 8px;
    height: 176px;
    border-left: 1px dotted #999;
}
.node{
    height: 16px;
    display: flex;
    align-items: center;
    padding-left: 8px;
    white-space: nowrap;
}
.node > span{
    margin-left: 3px;
}
.plus{
    position: relative;
    z-index: 1;
    width: 9px;
    height: 9px;
    border: 1px solid #808080;
    background: linear-gradient(135deg, #fff, #d8d5c8);
}
.plus::before{
    content: "";
    position: absolute;
    left: 1px;
    top: 3px;
    width: 5px;
    height: 1px;
    background: #000;
}
.plus::after{
    content: "";
    position: absolute;
    left: 3px;
    top: 1px;
    width: 1px;
    height: 5px;
    background: #000;
}
.plus.minus::after{
    display: none;
}
.dash{
    width: 6px;
    border-top: 1px dotted #999;
}
.leaf{
    padding-left: 30px;
}
.leaf-dash{
    width: 12px;
    border-top: 1px dotted #999;
}
.gear{
    width: 12px;
    height: 12px;
    margin-left: 1px;
}
.node > .leaf-name{
    margin-left: 2px;
    padding: 0 5px;
    font-family: "Liberation Mono", monospace;
    font-size: 11px;
    letter-spacing: -0.6px;
}
.node > .leaf-sel{
    background: #ece9d8;
}

/* right pane */
.pane{
    flex: 1;
    display: flex;
    flex-direction: column;
    margin-left: 7px;
    background: #fff;
    border-left: 1px solid #aca899;
}
.toolbar2{
    height: 25px;
    flex: none;
    display: flex;
    align-items: center;
    padding-left: 2px;
    background: linear-gradient(#f7f6ef, #ece9da);
    white-space: nowrap;
}
.aje{
    font-family: "Liberation Serif", serif;
    font-size: 14px;
    width: 18px;
}
.nav-ic{
    width: 12px;
    height: 14px;
    margin-right: 12px;
    flex: none;
}
.grid{
    width: 895px;
    table-layout: fixed;
    border-collapse: collapse;
    border-top: 2px solid #a7b3c0;
}
.c-no{
    width: 33px;
}
.c-name{
    width: 73px;
}
.c-dia{
    width: 56px;
}
.c-lvl{
    width: 36px;
}
.c-fig{
    width: 33px;
}
.c-shape{
    width: 211px;
}
.c-calc{
    width: 166px;
}
.c-desc{
    width: 156px;
}
.c-len{
    width: 61px;
}
.c-count{
    width: 38px;
}
.c-lap{
    width: 31px;
}
.grid th,
.grid td{
    padding: 0 0 0 2px;
    border: 1px solid #c0c0c0;
    white-space: nowrap;
    overflow: hidden;
    font-weight: normal;
}
.r-head{
    height: 20px;
}
.r-head th{
    text-align: center;
    padding: 0;
    background: linear-gradient(#f9f8f3, #e6e3d5);
}
.unit{
    font-size: 10px;
    letter-spacing: -0.5px;
}
.grid .hot{
    color: #a6282a;
    background: linear-gradient(#fde3ae, #f8cb7e);
}
.r-1{
    height: 34px;
}
.r-2{
    height: 32px;
}
.r-3,
.r-4{
    height: 29px;
}
.r-5{
    height: 20px;
}
.sel td{
    background: #b5d9fb;
}
.grid .rn{
    text-align: left;
    padding-left: 10px;
    background: linear-gradient(90deg, #f7f6f0, #e5e2d4);
    font-family: "Liberation Mono", monospace;
    font-size: 11px;
}
.grid .cur{
    color: #a6282a;
    background: #fcd28e;
}
.grid .dia{
    border-left: 1px solid #000;
}
.grid .ctr{
    text-align: center;
    font-size: 11px;
}
.shape{
    position: relative;
}
.grid .shape{
    padding: 0;
}
.shape svg{
    display: block;
}
.bar{
    fill: none;
    stroke: #000;
    stroke-width: 2;
    stroke-linejoin: round;
}
.dim,
.red{
    font-family: "Liberation Mono", monospace;
    font-size: 11px;
    letter-spacing: -0.6px;
}
.red{
    fill: #c4142c;
}
.cnt-red{
    color: #b01020;
}
.grid .edit{
    padding: 0 1px 0 2px;
}
.edit-box{
    display: flex;
    justify-content: space-between;
    align-items: flex-start;
}
.edit-val{
    margin-top: 1px;
}
.dots{
    width: 15px;
    height: 27px;
    border: 1px solid #1d3f66;
    border-radius: 3px;
    background: linear-gradient(#fff, #d8d8d4);
    text-align: center;
    font-family: "Liberation Sans", sans-serif;
    font-size: 13px;
    font-weight: bold;
    line-height: 24px;
    letter-spacing: -0.6px;
}

/* browser on the right */
.browser{
    flex: 1;
    position: relative;
    display: flex;
    flex-direction: column;
    min-width: 0;
    background: #f3f3f3;
    color: #444;
}
.b-menu{
    height: 29px;
    flex: none;
    display: flex;
    align-items: center;
    gap: 17px;
    padding-left: 129px;
    padding-bottom: 8px;
    color: #555;
    white-space: nowrap;
}
.b-menu span{
    flex: none;
}
.chev{
    margin-right: -9px;
    color: #888;
}
.skin{
    width: 30px;
    height: 21px;
    flex: none;
    margin-left: 2px;
    display: flex;
    align-items: center;
    justify-content: center;
    background: #f8f8f8;
    border: 1px solid #bbb;
    border-radius: 3px;
}
.b-addr{
    height: 26px;
    flex: none;
    display: flex;
    align-items: center;
    gap: 5px;
    background: #fff;
    border-top: 1px solid #ccc;
    border-bottom: 1px solid #ccc;
    white-space: nowrap;
    overflow: hidden;
}
.url{
    width: 243px;
    flex: none;
    font-family: "Liberation Sans", sans-serif;
    font-size: 15px;
    color: #333;
}
.url-rest{
    color: #aaa;
}
.addr-drop{
    width: 28px;
    height: 24px;
    margin-left: 4px;
    display: flex;
    align-items: center;
    justify-content: center;
    background: #f6f6f6;
    border-left: 1px solid #ccc;
    border-right: 1px solid #ccc;
}
.paw{
    margin-left: 7px;
}
.search-hint{
    margin-left: 5px;
    font-size: 14px;
    color: #aaa;
}
.b-fav{
    height: 38px;
    flex: none;
    display: flex;
    align-items: center;
    white-space: nowrap;
}
.fav-num{
    width: 22px;
    font-size: 11px;
}
.fav-city{
    margin-left: 2px;
    font-size: 13px;
}
.fav-more{
    margin-left: 10px;
    width: 65px;
    font-size: 20px;
    color: #999;
}
.grip{
    width: 3px;
    height: 14px;
    margin-right: 13px;
    border-left: 3px dotted #ccc;
}
.fav-tool{
    display: flex;
    align-items: center;
    gap: 2px;
    font-size: 13px;
    flex: none;
}
.fav-tool .caret{
    margin-left: 10px;
    border-top-color: #888;
}
.f-tr{
    margin-left: 9px;
}
.f-sh{
    margin-left: 10px;
}
.aa{
    font-family: "Liberation Sans", sans-serif;
    font-size: 9px;
    fill: #c44;
}
.b-tabs{
    height: 27px;
    flex: none;
    display: flex;
    border-bottom: 1px solid #bbb;
}
.tab{
    width: 199px;
    margin-bottom: -1px;
    display: flex;
    align-items: center;
    padding-left: 9px;
    background: #fff;
    border: 1px solid #bbb;
    border-left: none;
    border-bottom: none;
    border-radius: 0 4px 0 0;
    overflow: hidden;
}
.tab-text{
    width: 166px;
    flex: none;
    overflow: hidden;
    white-space: nowrap;
    color: #333;
}
.tab-x{
    margin-left: 6px;
    font-size: 15px;
    color: #888;
}
.tab-new{
    width: 25px;
    text-align: center;
    font-size: 18px;
    line-height: 25px;
    color: #777;
    border-right: 1px solid #ccc;
}
.b-body{
    flex: 1;
    min-height: 0;
    background: #fff;
    padding-left: 4px;
    padding-top: 9px;
    display: flex;
    flex-direction: column;
}
.q-list{
    flex: none;
    height: 136px;
    border-bottom: 1px solid #ccc;
}
.q{
    height: 34px;
    display: flex;
    align-items: center;
    padding-left: 7px;
    padding-bottom: 3px;
    border-top: 1px dotted #bbb;
    white-space: nowrap;
    overflow: hidden;
    color: #222;
}
.q a{
    font-size: 14px;
    color: #1a2bb0;
}
.coin{
    width: 10px;
    height: 10px;
    margin-left: 10px;
    flex: none;
}
.pts{
    margin-left: 5px;
    font-size: 12px;
    color: #c88762;
    font-family: "Liberation Sans", sans-serif;
}
.cat{
    margin-left: 8px;
}
.meta{
    height: 36px;
    flex: none;
    line-height: 36px;
    color: #999;
    white-space: nowrap;
    overflow: hidden;
}
.mail{
    font-family: "Liberation Mono", monospace;
    font-size: 10px;
    font-weight: bold;
    color: #333;
}
.bar-v{
    margin: 0 13px;
}
.question{
    height: 20px;
    flex: none;
    font-size: 14px;
    line-height: 20px;
    color: #111;
    white-space: nowrap;
}
.cad{
    flex: none;
    display: block;
    margin: 42px 0 20px 82px;
}
.cad path{
    fill: none;
}
.cy path{
    stroke: #4fdbe9;
    stroke-width: 3;
}
.mg path{
    stroke: #d42be0;
    stroke-width: 10;
}
.mg .mg-top{
    stroke-width: 16;
}
.cad .rd{
    stroke: #c8303a;
    stroke-width: 2;
}
.gn path{
    stroke: #3fe040;
    stroke-width: 3;
}
.gnf path{
    fill: #3fe040;
}
.cad-t text{
    font-family: "Roboto", "Liberation Sans", sans-serif;
    font-weight: 100;
    fill: #f2f2f2;
}
.cad-t .cad-cjk{
    font-family: "Noto Sans CJK SC", sans-serif;
}
.cad-g text{
    font-family: "Roboto", "Liberation Sans", sans-serif;
    font-weight: 100;
    fill: #3fe040;
}
.b-foot{
    flex: 1;
    background: #e8f2fb;
    border-top: 1px solid #c6d8ea;
}
.ad{
    position: absolute;
    right: 0;
    bottom: 0;
    width: 137px;
    height: 59px;
    overflow: hidden;
    background: linear-gradient(#d2205e, #b01448);
}
.ad-tri{
    position: absolute;
    left: 7px;
    top: 9px;
    border-left: 8px solid #f3b23a;
    border-top: 5px solid transparent;
    border-bottom: 5px solid transparent;
}
.ad-date{
    position: absolute;
    left: 28px;
    top: 13px;
    font-family: "Liberation Serif", serif;
    font-size: 11px;
    font-weight: bold;
    font-style: italic;
    color: #fff;
    white-space: nowrap;
}
.ad-tag{
    position: absolute;
    left: 25px;
    top: 27px;
    font-size: 9px;
    line-height: 11px;
    font-weight: bold;
    font-style: italic;
    color: #f7d9b0;
}
.ad-big{
    position: absolute;
    left: 6px;
    top: 37px;
    width: 140px;
    padding-left: 8px;
    font-size: 25px;
    font-weight: 900;
    line-height: 30px;
    color: #fff;
    background: #140306;
    white-space: nowrap;
    transform: skewY(-4deg);
}
.ad-big b{
    color: #f7c71a;
}
```
